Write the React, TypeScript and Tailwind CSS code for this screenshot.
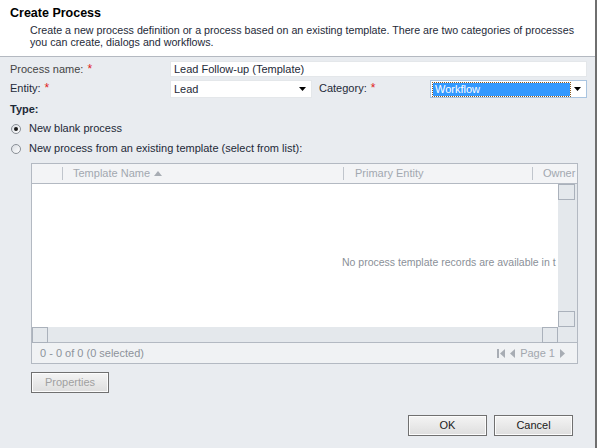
import React from "react";

const font = { fontFamily: '"Liberation Sans", Arial, sans-serif' };

const Star = () => <span className="text-[#e02020] ml-1 text-[12px] leading-none">*</span>;

const Arrow = () => (
  <svg width="7" height="4" viewBox="0 0 7 4" className="shrink-0">
    <path d="M0 0h7L3.5 4z" fill="#000" />
  </svg>
);

const Radio = ({ checked }: { checked?: boolean }) => (
  <span className="w-[10px] h-[10px] rounded-full border border-[#8a8f96] bg-gradient-to-br from-[#d8dce2] to-white flex items-center justify-center shrink-0">
    {checked && <span className="w-[4px] h-[4px] rounded-full bg-[#1a1a1a]" />}
  </span>
);

const ScrollBox = ({ className = "" }: { className?: string }) => (
  <div className={`w-[16px] h-[16px] border border-[#aab1bb] bg-[#e4e8ec] ${className}`} />
);

const Btn = ({ label, disabled, className = "" }: { label: string; disabled?: boolean; className?: string }) => (
  <div
    className={`h-[21px] border border-[#707070] bg-gradient-to-b from-[#f4f4f4] to-[#dedede] flex items-center justify-center text-[11px] shadow-[inset_0_0_0_1px_#fcfcfc] ${
      disabled ? "text-[#a0a0a0]" : "text-[#1a1a1a]"
    } ${className}`}
  >
    {label}
  </div>
);

export default function App() {
  return (
    <div className="w-[597px] h-[448px] bg-[#e9ecf0] flex flex-col text-[11px] text-[#1e2a38] border-r-2 border-[#6f6f6f] overflow-hidden" style={font}>
      {/* header */}
      <div className="bg-white h-[57px] border-b border-[#b4b9c1] pl-[10px] pt-[5px]">
        <div className="font-bold text-[12.5px] text-black leading-[16px]">Create Process</div>
        <div className="pl-[20px] pt-[3px] leading-[12px] text-[10.7px] text-[#1e2a38]">
          Create a new process definition or a process based on an existing template. There are two categories of processes
          <br />
          you can create, dialogs and workflows.
        </div>
      </div>

      {/* form */}
      <div className="pl-[10px] pr-[8px] pt-[4px]">
        <div className="flex items-center h-[16px]">
          <div className="w-[160px] text-[#444]">
            Process name:<Star />
          </div>
          <div className="flex-1 h-[16px] bg-white border border-[#e4e7ea] flex items-center px-[3px] text-[#1e2a38]">
            Lead Follow-up (Template)
          </div>
        </div>
        <div className="flex items-start h-[18px] mt-[3px]">
          <div className="w-[160px] text-[#1e2a38]">
            Entity:<Star />
          </div>
          <div className="w-[142px] h-[18px] bg-white border border-[#e4e7ea] flex items-center justify-between px-[3px] pr-[5px]">
            <span>Lead</span>
            <Arrow />
          </div>
          <div className="w-[118px] pl-[7px] text-[#1e2a38]">
            Category:<Star />
          </div>
          <div className="flex-1 h-[18px] bg-white border border-[#a9c4e0] flex items-center pl-[2px] pr-[5px] justify-between">
            <span className="h-[13px] w-[137px] bg-[#3399ff] text-white outline-1 outline-dotted outline-[#8a5a20] flex items-center pl-[2px] leading-none">
              Workflow
            </span>
            <Arrow />
          </div>
        </div>
        <div className="font-bold mt-[4px] leading-[14px] text-[#1e2a38]">Type:</div>
        <div className="flex items-center gap-[7px] pl-[1px] mt-[6px] h-[13px]">
          <Radio checked />
          <span className="pl-[1px]">New blank process</span>
        </div>
        <div className="flex items-center gap-[7px] pl-[1px] mt-[7px] h-[13px]">
          <Radio />
          <span className="pl-[1px]">New process from an existing template (select from list):</span>
        </div>

        {/* grid */}
        <div className="ml-[21px] w-[547px] mt-[8px] border border-[#b3b9c2] bg-white flex flex-col">
          <div className="h-[20px] bg-[#f3f4f6] border-b border-[#b3b9c2] flex items-center text-[#a2a8b0] overflow-hidden">
            <div className="w-[30px]" />
            <div className="w-[1px] h-[13px] bg-[#c0c5cc]" />
            <div className="w-[280px] pl-[10px] flex items-center gap-[4px]">
              Template Name
              <svg width="8" height="5" viewBox="0 0 8 5">
                <path d="M0 5L4 0l4 5z" fill="#a8adb4" />
              </svg>
            </div>
            <div className="w-[1px] h-[13px] bg-[#c0c5cc]" />
            <div className="w-[188px] pl-[11px]">Primary Entity</div>
            <div className="w-[1px] h-[13px] bg-[#c0c5cc]" />
            <div className="pl-[10px] whitespace-nowrap">Owner</div>
          </div>
          <div className="flex h-[143px]">
            <div className="flex-1 flex items-center pt-[14px] pl-[310px] overflow-hidden">
              <span className="whitespace-nowrap text-[10.5px] text-[#8a9098]">No process template records are available in t</span>
            </div>
            <div className="w-[19px] bg-[#e4e8ec] flex flex-col justify-between">
              <ScrollBox className="w-[17px]" />
              <ScrollBox className="w-[17px]" />
            </div>
          </div>
          <div className="h-[16px] flex bg-[#e4e8ec] border-b border-[#b3b9c2]">
            <ScrollBox className="h-[16px]" />
            <div className="flex-1" />
            <ScrollBox className="h-[16px]" />
            <div className="w-[19px]" />
          </div>
          <div className="h-[20px] bg-[#f0f2f4] flex items-center justify-between pl-[8px] pr-[12px] text-[#8d939b]">
            <span>0 - 0 of 0 (0 selected)</span>
            <div className="flex items-center gap-[4px] text-[#a2a7ae]">
              <svg width="9" height="9" viewBox="0 0 9 9">
                <path d="M0 0h2v9H0zM8 0v9L3 4.5z" fill="#a8adb4" />
              </svg>
              <svg width="6" height="9" viewBox="0 0 6 9">
                <path d="M5 0v9L0 4.5z" fill="#a8adb4" />
              </svg>
              <span>Page 1</span>
              <svg width="6" height="9" viewBox="0 0 6 9">
                <path d="M1 0v9l5-4.5z" fill="#a8adb4" />
              </svg>
            </div>
          </div>
        </div>

        <Btn label="Properties" disabled className="ml-[21px] mt-[8px] w-[78px]" />

        <div className="flex justify-end gap-[7px] mt-[22px] pr-[14px]">
          <Btn label="OK" className="w-[79px]" />
          <Btn label="Cancel" className="w-[79px]" />
        </div>
      </div>
    </div>
  );
}
